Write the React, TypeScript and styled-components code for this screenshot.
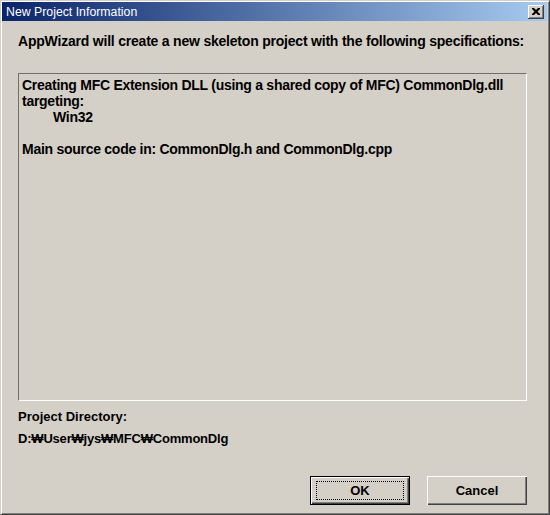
import styled, { createGlobalStyle } from "styled-components";

const GlobalStyle = createGlobalStyle`
  html, body {
    margin: 0;
    padding: 0;
    background: #d4d0c8;
  }
`;

const Window = styled.div`
  box-sizing: border-box;
  width: 550px;
  height: 515px;
  display: flex;
  flex-direction: column;
  background: #d4d0c8;
  border-top: 1px solid #d4d0c8;
  border-left: 1px solid #d4d0c8;
  border-right: 1px solid #404040;
  border-bottom: 1px solid #404040;
  box-shadow: inset 1px 1px 0 #fff, inset -1px -1px 0 #808080;
  padding: 1px 2px 2px 1px;
  font-family: "Liberation Sans", Arial, sans-serif;
`;

const TitleBar = styled.div`
  height: 19px;
  display: flex;
  align-items: center;
  justify-content: space-between;
  padding: 0 3px 0 4px;
  background: linear-gradient(to right, #0a246a, #a6caf0);
  color: #fff;
  font-size: 12.3px;
  flex-shrink: 0;
`;

const CloseButton = styled.button`
  box-sizing: border-box;
  width: 16px;
  height: 14px;
  padding: 0;
  display: flex;
  align-items: center;
  justify-content: center;
  background: #d4d0c8;
  border: none;
  box-shadow: inset -1px -1px 0 #404040, inset 1px 1px 0 #fff, inset -2px -2px 0 #808080;
`;

const Body = styled.div`
  flex: 1;
  display: flex;
  flex-direction: column;
  padding: 12px 20px 7px 16px;
  font-size: 13px;
  font-weight: bold;
  color: #000;
`;

const Intro = styled.p`
  margin: 0 0 24px;
  font-size: 14px;
  line-height: 16px;
  letter-spacing: -0.21px;
`;

const Summary = styled.div`
  box-sizing: border-box;
  height: 328px;
  padding: 3px 3px;
  border-top: 1px solid #6f6f6f;
  border-left: 1px solid #6f6f6f;
  border-right: 1px solid #fff;
  border-bottom: 1px solid #fff;
  font-size: 14px;
  line-height: 16px;
  letter-spacing: -0.27px;
`;

const Line = styled.div<{ $indent?: boolean }>`
  min-height: 16px;
  padding-left: ${(p) => (p.$indent ? "31px" : "0")};
`;

const Label = styled.div`
  margin-top: 8px;
  line-height: 16px;
`;

const Path = styled.div`
  margin-top: 6px;
  line-height: 16px;
  letter-spacing: -0.2px;
`;

const ButtonRow = styled.div`
  margin-top: auto;
  display: flex;
  justify-content: flex-end;
  gap: 17px;
`;

const Button = styled.button<{ $default?: boolean }>`
  box-sizing: border-box;
  width: 100px;
  height: 29px;
  padding: 0;
  background: #d4d0c8;
  font-family: "Liberation Sans", Arial, sans-serif;
  font-size: 13px;
  font-weight: bold;
  color: #000;
  border: ${(p) => (p.$default ? "1px solid #000" : "none")};
  box-shadow: inset 1px 1px 0 #fff, inset -1px -1px 0 #404040, inset -2px -2px 0 #808080;
  display: flex;
  align-items: center;
  justify-content: center;
`;

const Focus = styled.span`
  box-sizing: border-box;
  width: 88px;
  height: 19px;
  display: flex;
  align-items: center;
  justify-content: center;
  border: 1px dotted #000;
`;

export default function App() {
  return (
    <>
      <GlobalStyle />
      <Window>
        <TitleBar>
          <span>New Project Information</span>
          <CloseButton>
            <svg width="8" height="7" viewBox="0 0 8 7">
              <path d="M0 0h2l2 2 2-2h2v1L5.5 3.5 8 6v1H6L4 5 2 7H0V6l2.5-2.5L0 1z" fill="#000" />
            </svg>
          </CloseButton>
        </TitleBar>
        <Body>
          <Intro>AppWizard will create a new skeleton project with the following specifications:</Intro>
          <Summary>
            <Line>Creating MFC Extension DLL (using a shared copy of MFC) CommonDlg.dll</Line>
            <Line>targeting:</Line>
            <Line $indent>Win32</Line>
            <Line />
            <Line>Main source code in: CommonDlg.h and CommonDlg.cpp</Line>
          </Summary>
          <Label>Project Directory:</Label>
          <Path>D:₩User₩jys₩MFC₩CommonDlg</Path>
          <ButtonRow>
            <Button $default>
              <Focus>OK</Focus>
            </Button>
            <Button>Cancel</Button>
          </ButtonRow>
        </Body>
      </Window>
    </>
  );
}
